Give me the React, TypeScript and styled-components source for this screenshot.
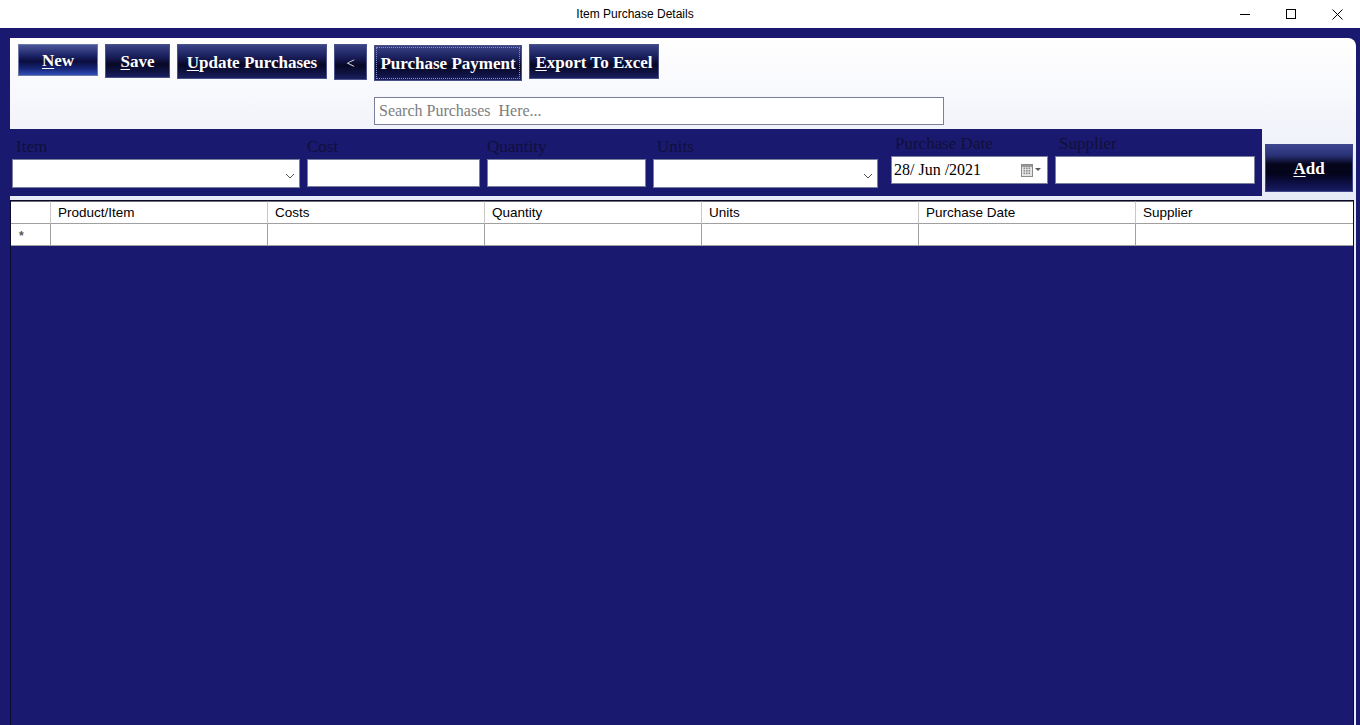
import React from "react";
import styled, { createGlobalStyle } from "styled-components";

const GlobalStyle = createGlobalStyle`
  html, body { margin: 0; padding: 0; background: #191970; }
  #root { width: 1360px; height: 725px; }
  * { box-sizing: border-box; }
`;

const Window = styled.div`
  width: 1360px;
  height: 725px;
  display: flex;
  flex-direction: column;
  overflow: hidden;
`;

const TitleBar = styled.div`
  height: 28px;
  background: #ffffff;
  display: flex;
  align-items: center;
  flex-shrink: 0;
`;

const TitleText = styled.div`
  flex: 1;
  text-align: center;
  padding-left: 48px;
  font-family: "Liberation Sans", Arial, sans-serif;
  font-size: 12px;
  color: #000;
`;

const Controls = styled.div`
  display: flex;
  height: 28px;
`;

const ControlBtn = styled.div`
  width: 46px;
  height: 28px;
  display: flex;
  align-items: center;
  justify-content: center;
`;

const Client = styled.div`
  flex: 1;
  background: #191970;
  padding: 10px 4px 0 10px;
  display: flex;
  min-height: 0;
`;

const Panel = styled.div`
  flex: 1;
  display: flex;
  flex-direction: column;
  background: linear-gradient(180deg, #ffffff 0px, #f4f5fb 80px, #e6eaf7 165px, #e6eaf7 100%);
  border-top-right-radius: 8px;
  min-height: 0;
`;

const Toolbar = styled.div`
  padding: 6px 0 4px 8px;
  display: flex;
  flex-direction: column;
`;

const ButtonRow = styled.div`
  display: flex;
  gap: 7px;
  align-items: flex-start;
  height: 37px;
`;

const NavButton = styled.button<{ $w: number; $h: number; $glow?: boolean; $focus?: boolean }>`
  width: ${(p) => p.$w}px;
  height: ${(p) => p.$h}px;
  margin-top: ${(p) => (p.$focus ? 1 : 0)}px;
  padding: 2px 0 0 0;
  border: 1px solid ${(p) => (p.$glow ? "#6b78a8" : "#4a5088")};
  background: ${(p) =>
    p.$glow
      ? "linear-gradient(180deg, #4a5698 0%, #1d2468 35%, #0a0d3e 55%, #18267a 80%, #3050b8 100%)"
      : "linear-gradient(180deg, #3a4386 0%, #1a1f5c 35%, #070826 60%, #101445 85%, #1a2060 100%)"};
  color: #ffffff;
  font-family: "Liberation Serif", "Times New Roman", serif;
  font-weight: bold;
  font-size: 17px;
  display: flex;
  align-items: center;
  justify-content: center;
  cursor: pointer;
  outline: ${(p) => (p.$focus ? "1px dotted #8890c0" : "none")};
  outline-offset: -3px;
  u { text-decoration-thickness: 1px; text-underline-offset: 2px; }
`;

const SearchInput = styled.input`
  margin-top: 16px;
  margin-left: 356px;
  width: 570px;
  height: 28px;
  border: 1px solid #7a7f9e;
  background: #ffffff;
  padding: 0 4px;
  font-family: "Liberation Serif", "Times New Roman", serif;
  font-size: 16px;
  color: #000;
  outline: none;
  &::placeholder { color: #7d7d7d; }
`;

const EntryRow = styled.div`
  display: flex;
  align-items: flex-start;
  gap: 3px;
`;

const EntryBar = styled.div`
  width: 1252px;
  height: 67px;
  background: #191970;
  display: flex;
  align-items: flex-start;
  padding: 8px 0 0 2px;
  gap: 7px;
`;

const Field = styled.div<{ $w: number; $lift?: number; $gapLeft?: number }>`
  width: ${(p) => p.$w}px;
  display: flex;
  flex-direction: column;
  margin-top: ${(p) => -(p.$lift || 0)}px;
  margin-left: ${(p) => p.$gapLeft || 0}px;
`;

const Label = styled.div<{ $indent?: number }>`
  height: 20px;
  line-height: 20px;
  padding-left: ${(p) => p.$indent || 0}px;
  margin-bottom: 2px;
  font-family: "Liberation Serif", "Times New Roman", serif;
  font-size: 17px;
  color: #10103a;
  white-space: nowrap;
`;

const Box = styled.div<{ $h: number }>`
  height: ${(p) => p.$h}px;
  background: #ffffff;
  border: 1px solid #7a7f9e;
  display: flex;
  align-items: center;
  justify-content: space-between;
  padding: 0 2px 0 2px;
  font-family: "Liberation Serif", "Times New Roman", serif;
  font-size: 16px;
  color: #000;
`;

const AddButton = styled.button`
  margin-top: 15px;
  width: 88px;
  height: 48px;
  padding: 2px 0 0 0;
  border: 1px solid #3e4688;
  background: linear-gradient(180deg, #3c4690 0%, #2a3278 22%, #05051c 42%, #03031a 62%, #0e1048 85%, #181c62 100%);
  color: #fff;
  font-family: "Liberation Serif", "Times New Roman", serif;
  font-weight: bold;
  font-size: 17px;
  display: flex;
  align-items: center;
  justify-content: center;
  u { text-decoration-thickness: 1px; text-underline-offset: 2px; }
`;

const GridArea = styled.div`
  margin-top: 4px;
  margin-right: 2px;
  flex: 1;
  background: #191970;
  border: 1px solid #0a0a30;
  border-bottom: none;
  min-height: 0;
`;

const Table = styled.div`
  display: grid;
  grid-template-columns: 39px repeat(5, 217px) 1fr;
  background: #ffffff;
  font-family: "Liberation Sans", Arial, sans-serif;
  font-size: 13.5px;
  color: #000;
  border-bottom: 1px solid #a0a0a0;
`;

const HeadCell = styled.div<{ $first?: boolean }>`
  height: 23px;
  line-height: 22px;
  padding-left: 7px;
  border-top: 1px solid #6e6e6e;
  border-left: ${(p) => (p.$first ? "none" : "1px solid #c8c8c8")};
  border-bottom: 1px solid #a0a0a0;
`;

const Cell = styled.div<{ $first?: boolean }>`
  height: 21px;
  border-left: ${(p) => (p.$first ? "none" : "1px solid #a0a0a0")};
  display: flex;
  align-items: center;
  padding-left: 8px;
  padding-top: 3px;
  color: #555;
  font-size: 12px;
  font-weight: bold;
`;

const Chevron = () => (
  <svg width="10" height="6" viewBox="0 0 10 6" style={{ marginRight: 2, marginTop: 4 }}>
    <polyline points="1,1 5,5 9,1" fill="none" stroke="#555" strokeWidth="1" />
  </svg>
);

const CalendarIcon = () => (
  <svg width="22" height="13" viewBox="0 0 22 13" style={{ marginRight: 2 }}>
    <rect x="0.5" y="0.5" width="11" height="12" fill="#e6e6e6" stroke="#8a8a8a" />
    <rect x="1" y="1" width="10" height="2" fill="#9a9a9a" />
    {[3.5, 6, 8.5].map((x) =>
      [4.5, 7, 9.5].map((y) => (
        <rect key={`${x}-${y}`} x={x - 1} y={y - 1} width="1.6" height="1.6" fill="#8a8a8a" />
      ))
    )}
    <polygon points="14,4 20,4 17,7" fill="#5a5a5a" />
  </svg>
);

const columns = ["Product/Item", "Costs", "Quantity", "Units", "Purchase Date", "Supplier"];

export default function App() {
  return (
    <Window>
      <GlobalStyle />
      <TitleBar>
        <TitleText>Item Purchase Details</TitleText>
        <Controls>
          <ControlBtn>
            <svg width="10" height="10" viewBox="0 0 10 10">
              <line x1="0" y1="5.5" x2="10" y2="5.5" stroke="#000" strokeWidth="1" />
            </svg>
          </ControlBtn>
          <ControlBtn>
            <svg width="10" height="10" viewBox="0 0 10 10">
              <rect x="0.5" y="0.5" width="9" height="9" fill="none" stroke="#000" strokeWidth="1" />
            </svg>
          </ControlBtn>
          <ControlBtn>
            <svg width="11" height="11" viewBox="0 0 11 11">
              <line x1="0.5" y1="0.5" x2="10.5" y2="10.5" stroke="#000" strokeWidth="1" />
              <line x1="10.5" y1="0.5" x2="0.5" y2="10.5" stroke="#000" strokeWidth="1" />
            </svg>
          </ControlBtn>
        </Controls>
      </TitleBar>
      <Client>
        <Panel>
          <Toolbar>
            <ButtonRow>
              <NavButton $w={80} $h={32} $glow>
                <span><u>N</u>ew</span>
              </NavButton>
              <NavButton $w={65} $h={34}>
                <span><u>S</u>ave</span>
              </NavButton>
              <NavButton $w={150} $h={35}>
                <span><u>U</u>pdate Purchases</span>
              </NavButton>
              <NavButton $w={33} $h={36}>
                <span style={{ fontWeight: "normal", fontSize: 15 }}>&lt;</span>
              </NavButton>
              <NavButton $w={148} $h={36} $focus>
                <span>Purchase Payment</span>
              </NavButton>
              <NavButton $w={130} $h={35}>
                <span><u>E</u>xport To Excel</span>
              </NavButton>
            </ButtonRow>
            <SearchInput placeholder="Search Purchases  Here..." />
          </Toolbar>
          <EntryRow>
            <EntryBar>
              <Field $w={288}>
                <Label $indent={4}>Item</Label>
                <Box $h={29}>
                  <span />
                  <Chevron />
                </Box>
              </Field>
              <Field $w={173}>
                <Label>Cost</Label>
                <Box $h={28} />
              </Field>
              <Field $w={159}>
                <Label>Quantity</Label>
                <Box $h={28} />
              </Field>
              <Field $w={225}>
                <Label $indent={4}>Units</Label>
                <Box $h={29}>
                  <span />
                  <Chevron />
                </Box>
              </Field>
              <Field $w={157} $lift={3} $gapLeft={6}>
                <Label $indent={4}>Purchase Date</Label>
                <Box $h={28}>
                  <span>28/ Jun /2021</span>
                  <CalendarIcon />
                </Box>
              </Field>
              <Field $w={200} $lift={3}>
                <Label $indent={4}>Supplier</Label>
                <Box $h={28} />
              </Field>
            </EntryBar>
            <AddButton>
              <span><u>A</u>dd</span>
            </AddButton>
          </EntryRow>
          <GridArea>
            <Table>
              <HeadCell $first />
              {columns.map((c) => (
                <HeadCell key={c}>{c}</HeadCell>
              ))}
              <Cell $first>*</Cell>
              {columns.map((c) => (
                <Cell key={c} />
              ))}
            </Table>
          </GridArea>
        </Panel>
      </Client>
    </Window>
  );
}
